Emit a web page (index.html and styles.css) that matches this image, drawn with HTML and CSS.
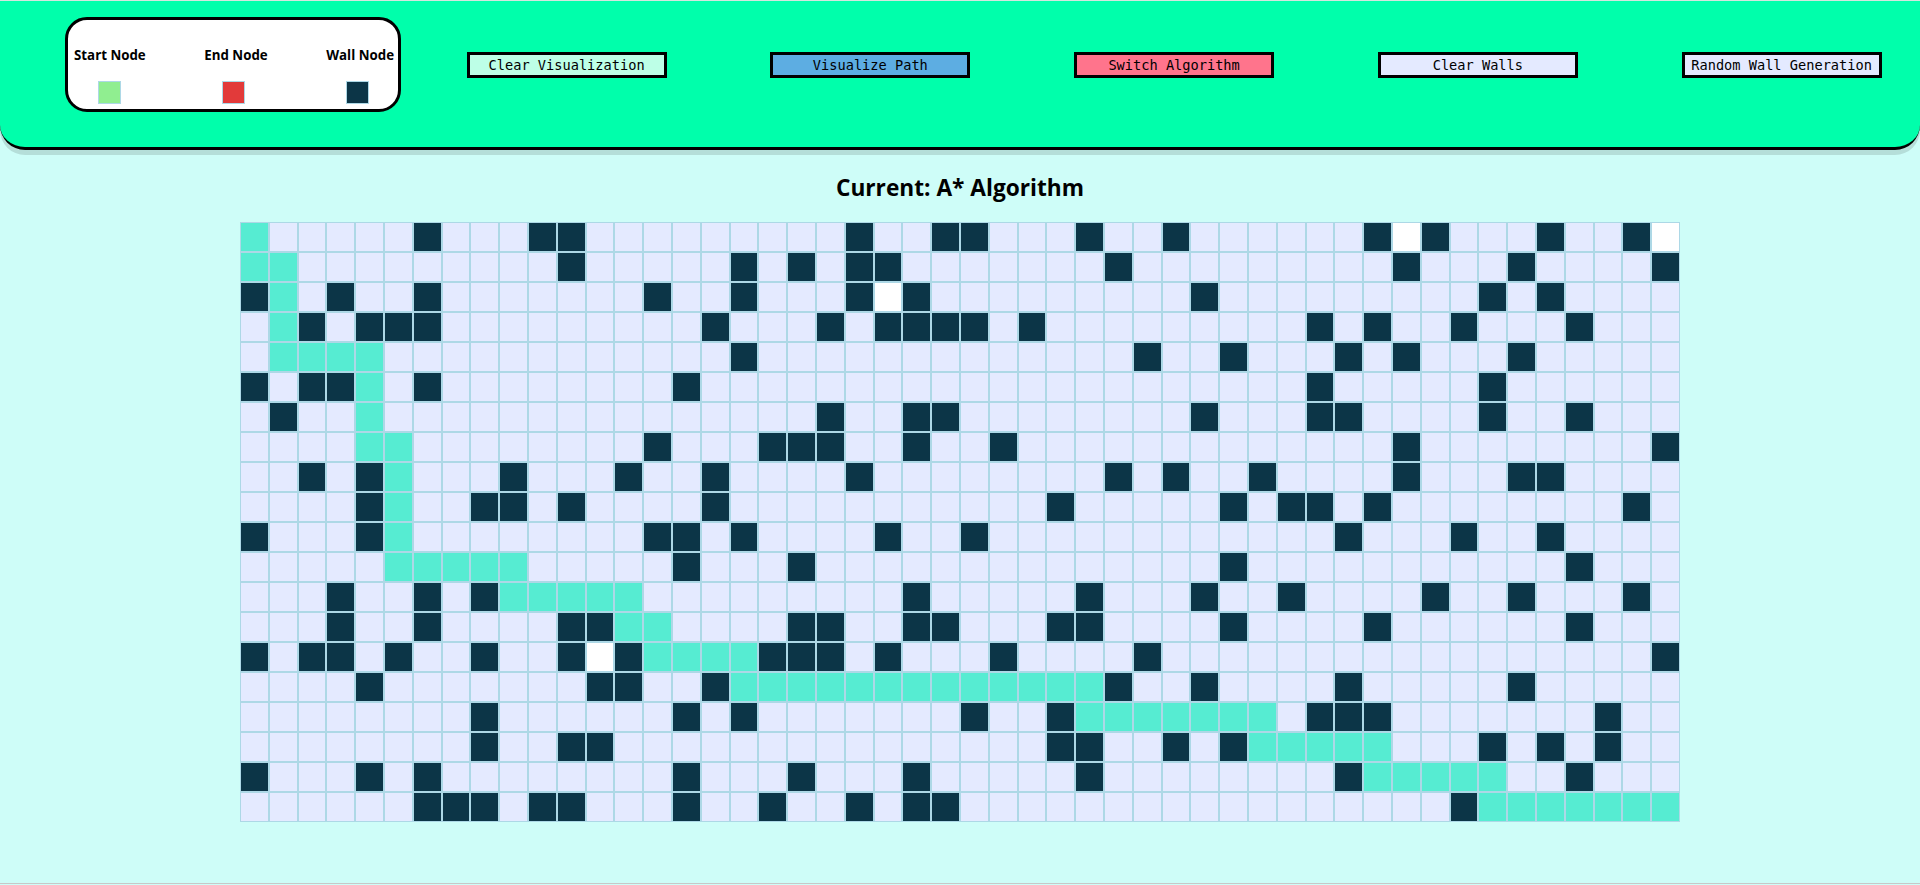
FILE: index.html
```html
<!DOCTYPE html>
<html lang="en">
<head>
<meta charset="utf-8">
<title>Pathfinding Visualizer</title>
<link rel="stylesheet" href="styles.css">
</head>
<body>
<div class="page">
  <header class="topbar">
    <div class="legend">
      <div class="legend-item"><span class="legend-label">Start Node</span><span class="swatch swatch-start"></span></div>
      <div class="legend-item"><span class="legend-label">End Node</span><span class="swatch swatch-end"></span></div>
      <div class="legend-item"><span class="legend-label">Wall Node</span><span class="swatch swatch-wall"></span></div>
    </div>
    <nav class="actions">
      <button class="btn btn-mint" type="button">Clear Visualization</button>
      <button class="btn btn-blue" type="button">Visualize Path</button>
      <button class="btn btn-pink" type="button">Switch Algorithm</button>
      <button class="btn btn-pale" type="button">Clear Walls</button>
      <button class="btn btn-pale" type="button">Random Wall Generation</button>
    </nav>
  </header>
  <main class="content">
    <h2 class="title">Current: A* Algorithm</h2>
    <div class="grid" id="grid"></div>
  </main>
</div>
<script src="grid.js"></script>
</body>
</html>
```
FILE: styles.css
```css
* { box-sizing: border-box; }
html, body { margin: 0; padding: 0; height: 100%; }
body { background: #cefdf8; font-family: "Open Sans", "Noto Sans", sans-serif; color: #000; overflow: hidden; }
.page { height: 884px; border-top: 1px solid #d4e6df; border-bottom: 1px solid #c8c8c8; }
.topbar {
  height: 149px;
  display: flex;
  align-items: flex-start;
  padding: 16px 38.4px 0 65px;
  background: #00ffab;
  border-bottom: 3px solid #000;
  border-radius: 0 0 25px 25px;
  box-shadow: 0 5px 0 rgba(0, 0, 0, 0.12);
}
.legend {
  width: 336px;
  height: 95px;
  flex: none;
  display: flex;
  justify-content: space-between;
  padding: 26px 4px 0 6px;
  background: #fff;
  border: 3px solid #000;
  border-radius: 22px;
}
.legend-item { display: flex; flex-direction: column; align-items: center; gap: 17px; }
.legend-label { font-size: 13.3px; font-weight: 700; line-height: 18px; }
.swatch { display: block; width: 23px; height: 23px; border: 1px solid #add8e6; }
.swatch-start { background: #90ee90; }
.swatch-end { background: #e23a3a; margin-right: 4px; }
.swatch-wall { background: #0c3547; margin-right: 6px; }
.actions { flex: 1; display: flex; justify-content: space-between; margin: 35px 0 0 65.6px; }
.btn {
  width: 200px;
  height: 26px;
  padding: 0;
  border: 3px solid #000;
  border-radius: 0;
  color: #000;
  font-family: "DejaVu Sans Mono", monospace;
  font-size: 13.65px;
  line-height: 20px;
}
.btn-mint { background: #bdffe7; }
.btn-blue { background: #5dade2; }
.btn-pink { background: #ff748c; }
.btn-pale { background: #e4eaff; }
.content { padding-top: 23px; }
.title { margin: 0 0 19px; height: 30px; font-size: 22.7px; line-height: 30px; font-weight: 700; text-align: center; }
.grid {
  width: 1440px;
  margin: 0 auto;
  display: grid;
  grid-template-columns: repeat(50, 1fr);
  grid-auto-rows: 30px;
}
.cell { border: 1px solid #add8e6; background: #e4eaff; }
.cell-wall { background: #0c3547; }
.cell-path { background: #56ecd2; }
.cell-white { background: #fff; }
```
FILE: grid.js
```js
var walls = [
  [6,10,11,21,24,25,29,32,39,41,45,48],
  [11,17,19,21,22,30,40,44,49],
  [0,3,6,14,17,21,23,33,43,45],
  [2,4,5,6,16,20,22,23,24,25,27,37,39,42,46],
  [17,31,34,38,40,44],
  [0,2,3,6,15,37,43],
  [1,20,23,24,33,37,38,43,46],
  [14,18,19,20,23,26,40,49],
  [2,4,9,13,16,21,30,32,35,40,44,45],
  [4,8,9,11,16,28,34,36,37,39,48],
  [0,4,14,15,17,22,25,38,42,45],
  [15,19,34,46],
  [3,6,8,23,29,33,36,41,44,48],
  [3,6,11,12,19,20,23,24,28,29,34,39,46],
  [0,2,3,5,8,11,13,18,19,20,22,26,31,49],
  [4,12,13,16,30,33,38,44],
  [8,15,17,25,28,37,38,39,47],
  [8,11,12,28,29,32,34,43,45,47],
  [0,4,6,15,19,23,29,38,46],
  [6,7,8,10,11,15,18,21,23,24,42]
];
var paths = [
  [0,0],[0,1],[1,1],[1,1],[1,4],[4,4],[4,4],[4,5],[5,5],[5,5],
  [5,5],[5,9],[9,13],[13,14],[14,17],[17,29],[29,35],[35,39],[39,43],[43,49]
];
var whites = { "0-40": 1, "0-49": 1, "2-22": 1, "14-12": 1 };
var grid = document.getElementById("grid");
for (var r = 0; r < 20; r++) {
  for (var c = 0; c < 50; c++) {
    var cell = document.createElement("div");
    cell.className = "cell";
    if (walls[r].indexOf(c) !== -1) cell.className += " cell-wall";
    else if (whites[r + "-" + c]) cell.className += " cell-white";
    else if (c >= paths[r][0] && c <= paths[r][1]) cell.className += " cell-path";
    grid.appendChild(cell);
  }
}
```
